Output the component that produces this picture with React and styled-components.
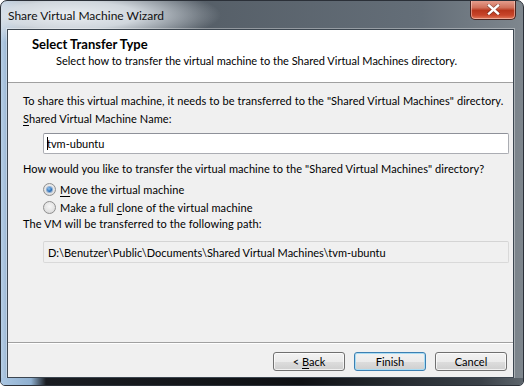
import React from "react";
import styled, { createGlobalStyle } from "styled-components";

const Global = createGlobalStyle`
  html, body { margin: 0; padding: 0; background: #ffffff; }
  body { width: 524px; height: 386px; overflow: hidden; font-family: Lato, "Noto Sans", sans-serif; }
`;

const Window = styled.div`
  width: 524px;
  height: 386px;
  box-sizing: border-box;
  border-radius: 7px 7px 5px 5px;
  border: 1px solid #2b3038;
  display: flex;
  flex-direction: column;
  padding: 0 9px 7px 6px;
  background:
    radial-gradient(ellipse 150px 30px at 70px 14px, rgba(236,240,244,0.98) 0%, rgba(220,226,232,0.9) 45%, rgba(200,208,216,0) 100%),
    linear-gradient(90deg, #b7cfe6 0px, #9bb7d4 6px, #6c7782 30px, #565f68 200px, #646e78 420px, #7f878e 524px);
  overflow: hidden;
  position: relative;
`;

const BottomGlow = styled.div`
  position: absolute;
  left: 0; right: 0; bottom: 0; height: 7px;
  background: linear-gradient(90deg, #aac6e2 0px, #8fb0d0 30px, #1a1d22 45px, #0f1114 300px, #3a4148 480px, #5f676e 524px);
`;

const TitleBar = styled.div`
  height: 28px;
  display: flex;
  align-items: flex-start;
  justify-content: space-between;
`;

const Title = styled.div`
  font-size: 12px;
  color: #111;
  padding: 7px 0 0 1px;
`;

const CloseButton = styled.div`
  width: 46px;
  height: 20px;
  margin-top: -1px;
  margin-right: -2px;
  box-sizing: border-box;
  border: 1px solid #4a2420;
  border-top: none;
  border-radius: 0 0 5px 5px;
  background: linear-gradient(180deg, #e8a393 0%, #d0705a 40%, #b8361c 55%, #c8452a 80%, #e07a5c 100%);
  box-shadow: inset 0 0 0 1px rgba(255,220,210,0.5);
  display: flex;
  align-items: center;
  justify-content: center;
`;

const Client = styled.div`
  flex: 1;
  display: flex;
  flex-direction: column;
  background: #f0f0f0;
  border: 1px solid #3c4650;
  box-shadow: 0 0 0 1px rgba(255,255,255,0.35);
`;

const Header = styled.div`
  height: 53px;
  box-sizing: border-box;
  background: #ffffff;
  border-bottom: 1px solid #a0a0a0;
  padding: 6px 0 0 24px;
  display: flex;
  flex-direction: column;
  gap: 1px;
`;

const HeaderTitle = styled.div`
  font-weight: 700;
  font-size: 13px;
  line-height: 16px;
  color: #000;
`;

const HeaderSub = styled.div`
  font-size: 11px;
  line-height: 16px;
  color: #000;
  padding-left: 24px;
`;

const Body = styled.div`
  flex: 1;
  padding: 10px 0 0 15px;
  display: flex;
  flex-direction: column;
`;

const Text = styled.div`
  font-size: 11px;
  line-height: 16px;
  letter-spacing: 0.08px;
  color: #000;
  margin-top: ${p => p.$mt || 0}px;
  white-space: nowrap;
`;

const Field = styled.div`
  margin: ${p => p.$mt || 0}px 4px 0 20px;
  height: ${p => p.$h}px;
  box-sizing: border-box;
  border: 1px solid ${p => (p.$readonly ? "#d9d9d9" : "#abadb3")};
  border-top-color: ${p => (p.$readonly ? "#d4d4d4" : "#8e9199")};
  background: ${p => (p.$readonly ? "#f0f0f0" : "#ffffff")};
  font-size: 11px;
  color: #000;
  display: flex;
  align-items: center;
  padding-left: ${p => (p.$readonly ? 4 : 3)}px;
  border-radius: 2px;
`;

const Caret = styled.span`
  display: inline-block;
  width: 1px;
  height: 13px;
  background: #000;
  margin-right: -1px;
`;

const RadioRow = styled.div`
  display: flex;
  align-items: center;
  gap: 4px;
  margin: ${p => p.$mt || 0}px 0 0 20px;
  height: 16px;
  font-size: 11px;
  letter-spacing: 0.08px;
  color: #000;
`;

const RadioCircle = styled.span`
  width: 13px;
  height: 13px;
  box-sizing: border-box;
  border-radius: 50%;
  border: 1px solid #8f8f8f;
  background: radial-gradient(circle at 50% 40%, #f6f6f6 0%, #e2e2e2 60%, #d0d0d0 100%);
  display: flex;
  align-items: center;
  justify-content: center;
`;

const RadioDot = styled.span`
  width: 5px;
  height: 5px;
  border-radius: 50%;
  background: radial-gradient(circle at 40% 35%, #8fc4f0 0%, #2a6fb8 60%, #1b4f8c 100%);
  box-shadow: 0 0 0 1px rgba(60,120,190,0.5);
`;

const U = styled.span`
  text-decoration: underline;
  text-underline-offset: 2px;
`;

const Footer = styled.div`
  border-top: 1px solid #a0a0a0;
  box-shadow: inset 0 1px 0 #ffffff;
  height: 35px;
  box-sizing: border-box;
  display: flex;
  justify-content: flex-end;
  align-items: flex-start;
  gap: 9px;
  padding: 9px 6px 0 0;
`;

const Button = styled.div`
  width: 72px;
  height: 19px;
  box-sizing: border-box;
  border: 1px solid ${p => (p.$default ? "#3c7fb1" : "#707070")};
  border-radius: 3px;
  background: linear-gradient(180deg, #f2f2f2 0%, #ebebeb 50%, #dddddd 51%, #cfcfcf 100%);
  box-shadow: inset 0 0 0 1px ${p => (p.$default ? "#a8dcf4" : "rgba(255,255,255,0.7)")};
  font-size: 11px;
  color: #000;
  display: flex;
  align-items: center;
  justify-content: center;
  gap: 3px;
`;

export default function App() {
  return (
    <>
      <Global />
      <Window>
        <TitleBar>
          <Title>Share Virtual Machine Wizard</Title>
          <CloseButton>
            <svg width="13" height="11" viewBox="0 0 13 11">
              <path d="M2 1.5 L11 9.5 M11 1.5 L2 9.5" stroke="#3a1a14" strokeWidth="3.6" strokeLinecap="square" opacity="0.5" />
              <path d="M2 1.5 L11 9.5 M11 1.5 L2 9.5" stroke="#ffffff" strokeWidth="2.4" strokeLinecap="square" />
            </svg>
          </CloseButton>
        </TitleBar>
        <Client>
          <Header>
            <HeaderTitle>Select Transfer Type</HeaderTitle>
            <HeaderSub>Select how to transfer the virtual machine to the Shared Virtual Machines directory.</HeaderSub>
          </Header>
          <Body>
            <Text>To share this virtual machine, it needs to be transferred to the "Shared Virtual Machines" directory.</Text>
            <Text $mt={2}><U>S</U>hared Virtual Machine Name:</Text>
            <Field $mt={6} $h={21}><Caret />tvm-ubuntu</Field>
            <Text $mt={7}>How would you like to transfer the virtual machine to the "Shared Virtual Machines" directory?</Text>
            <RadioRow $mt={4}>
              <RadioCircle><RadioDot /></RadioCircle>
              <span><U>M</U>ove the virtual machine</span>
            </RadioRow>
            <RadioRow $mt={2}>
              <RadioCircle />
              <span>Make a full <U>c</U>lone of the virtual machine</span>
            </RadioRow>
            <Text $mt={1}>The VM will be transferred to the following path:</Text>
            <Field $mt={9} $h={22} $readonly>D:\Benutzer\Public\Documents\Shared Virtual Machines\tvm-ubuntu</Field>
          </Body>
          <Footer>
            <Button><span>&lt;</span><span><U>B</U>ack</span></Button>
            <Button $default>Finish</Button>
            <Button>Cancel</Button>
          </Footer>
        </Client>
        <BottomGlow />
      </Window>
    </>
  );
}
